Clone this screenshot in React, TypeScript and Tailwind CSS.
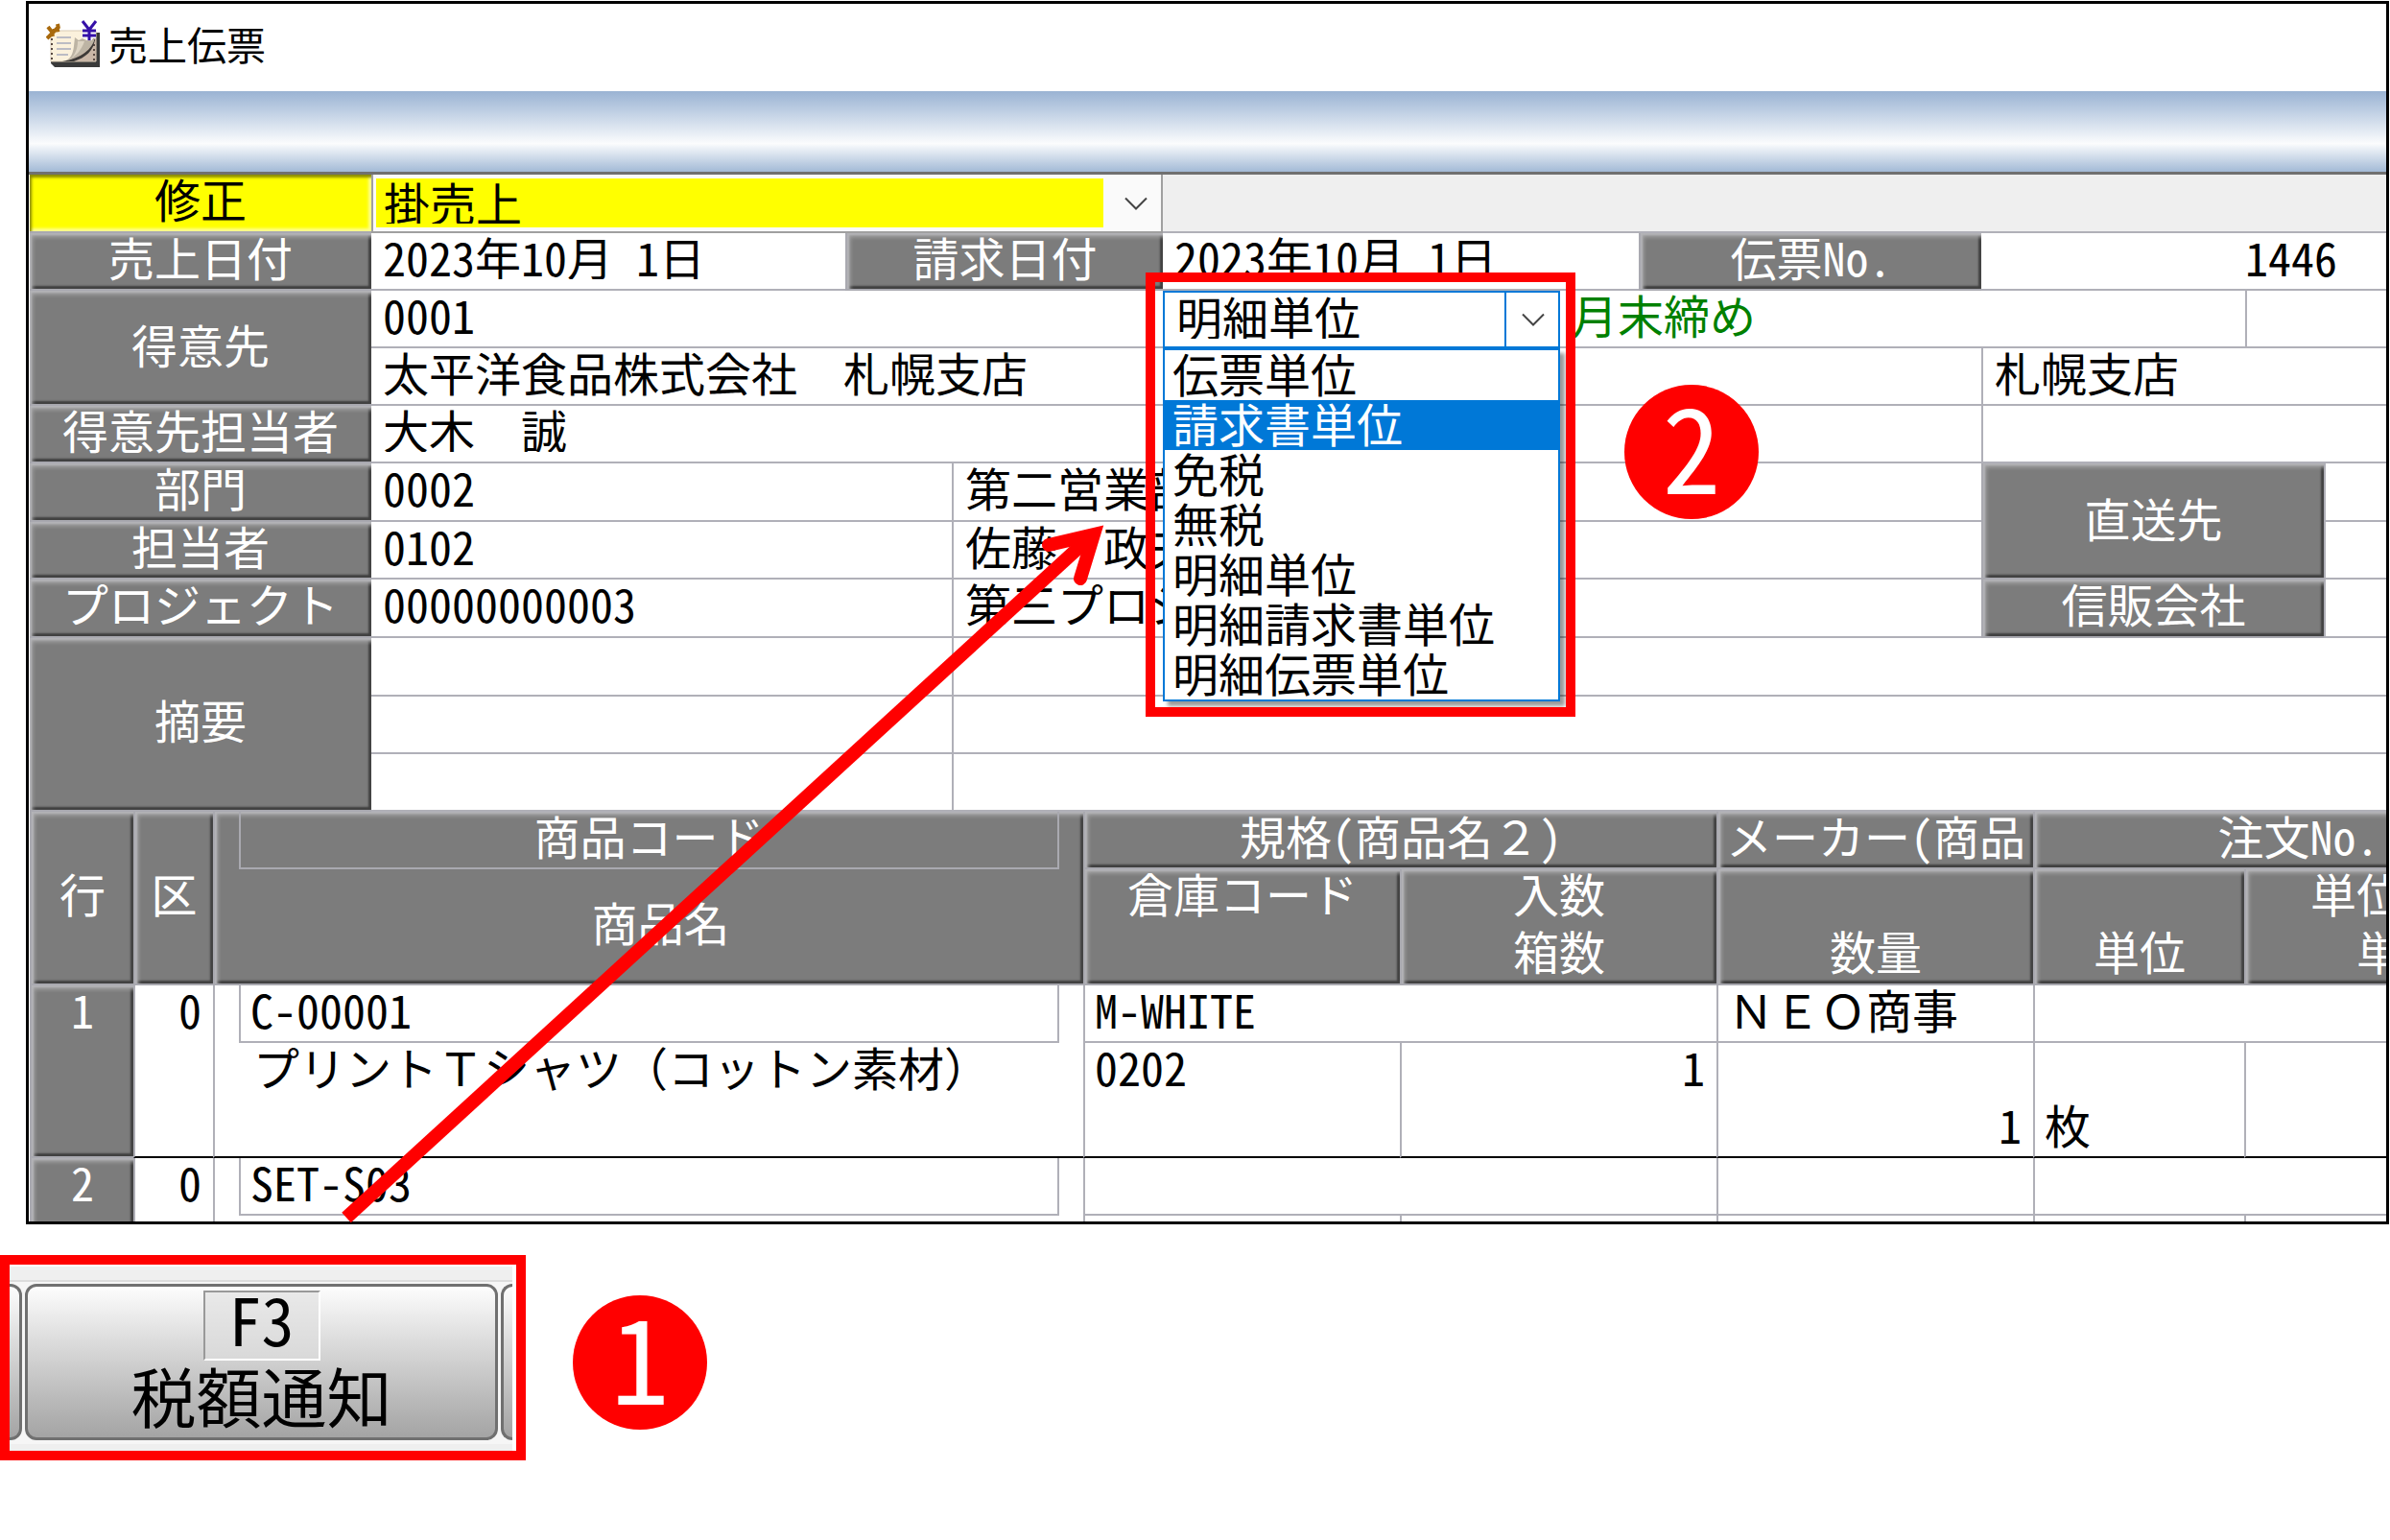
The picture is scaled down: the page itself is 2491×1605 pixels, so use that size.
import type { ReactNode } from 'react';
import { clsx } from 'clsx';

type CellProps = {
  className?: string;
  children?: ReactNode;
};

const bevel =
  'bg-[#7c7c7c] text-white shadow-[inset_2px_2px_2px_#b4b4b8,inset_3px_4px_4px_#a4a4a4,inset_-3px_-3px_2px_#404040] border-[#a9a9b0]';

// digits and latin letters are half width by default, this keeps Ｔ, ２ and （） at full width
const fullWidth = '[font-feature-settings:normal]';

const taxUnits = [
  '伝票単位',
  '請求書単位',
  '免税',
  '無税',
  '明細単位',
  '明細請求書単位',
  '明細伝票単位',
];

const Label: React.FC<CellProps & { htmlFor?: string }> = ({ className, children, htmlFor }) => (
  <label
    htmlFor={htmlFor}
    className={clsx('flex justify-center border-b-2 whitespace-nowrap', bevel, className)}
  >
    {children}
  </label>
);

const Cell: React.FC<CellProps> = ({ className, children }) => (
  <div className={clsx('border-b-2 border-[#b0b0b8] bg-white pl-3 whitespace-nowrap', className)}>
    {children}
  </div>
);

type FieldProps = { id: string; value: string; className?: string };

const Field: React.FC<FieldProps> = ({ id, value, className }) => (
  <input id={id} defaultValue={value} className={clsx('block h-12 w-full outline-none', className)} />
);

const Chevron = () => (
  <svg className="w-6" viewBox="0 0 24 14" fill="none" stroke="#444" strokeWidth="2">
    <path d="M1 1.5 12 12.5 23 1.5" />
  </svg>
);

const SlipIcon = () => (
  <svg className="h-[49px] w-[57px]" viewBox="0 0 57 49">
    <path d="M5 42h47V13h4v36H9l-4-4z" fill="#3a3a3a" />
    <path d="M5 11h47v32H5z" fill="#fbf1dc" stroke="#d9cbb4" />
    <path d="M11 18h15M11 24h15M11 30h15M11 36h12" stroke="#bcbcc4" strokeWidth="2" />
    <path d="M6 14v29M50 18v24" stroke="#5a4a44" strokeWidth="2" strokeDasharray="2 3" />
    <path d="M52 18v25H24z" fill="#c9b6a6" />
    <path d="M50 20v22" stroke="#5a4a44" strokeWidth="2" strokeDasharray="2 3" />
    <path d="M18 43c8-2 10-8 11-16l1-9 4 3 4-2 4 2 9-2C48 29 36 39 18 43z" fill="#bdb4a4" />
    <path d="M33 22c0 8-3 14-7 18 6-4 11-9 14-18z" fill="#ded5c4" />
    <path d="M51 19C48 30 37 40 17 43h12c12-4 21-11 22-24z" fill="#3d3a37" />
    <path d="m1 19 12-12M2 7l4 5 1 5M7 11l7-1M12 4l1 5" stroke="#a8690c" strokeWidth="4" fill="none" />
    <path d="m38 1 7 9 7-9M45 10v11M38 11h14M38 16h14" stroke="#fff" strokeWidth="6" fill="none" />
    <path d="m38 1 7 9 7-9M45 10v11M38 11h14M38 16h14" stroke="#3510a8" strokeWidth="3" fill="none" />
  </svg>
);

const TaxUnitSelect = () => (
  <div className="relative h-[60px] w-[414px] bg-white">
    <select
      aria-label="税額通知"
      defaultValue="明細単位"
      className="h-full w-full appearance-none border-2 border-[#0078d7] pb-2 pl-3 outline-none"
    >
      {taxUnits.map((unit) => (
        <option key={unit}>{unit}</option>
      ))}
    </select>
    <div className="pointer-events-none absolute inset-y-0 right-0 flex w-[58px] items-center justify-center border-l-2 border-[#0078d7]">
      <Chevron />
    </div>
    <ul
      role="listbox"
      className="absolute top-full left-0 z-10 w-full border-2 border-[#0078d7] bg-white text-black shadow-[5px_5px_4px_#0006]"
    >
      {taxUnits.map((unit) => (
        <li
          key={unit}
          role="option"
          aria-selected={unit === '請求書単位'}
          className={clsx(
            'h-[52px] pl-2 leading-[46px]',
            unit === '請求書単位' && 'bg-[#0078d7] text-white',
          )}
        >
          {unit}
        </li>
      ))}
    </ul>
  </div>
);

const SlipForm = () => (
  <div className="grid grid-cols-[356px_494px_111px_220px_496px_357px_275px_82px_1fr] grid-rows-[61px_60px_60px_60px_60px_61px_60px_61px_61px_60px_60px]">
    <label
      htmlFor="kind"
      className="flex justify-center border-b-2 border-[#a9a9b0] bg-[#ff0] shadow-[inset_2px_3px_3px_#8a8a00,inset_-3px_-3px_3px_#ffff90]"
    >
      修正
    </label>
    <div className="relative col-span-3 border-x-2 border-b-2 border-[#a0a0a0] bg-[#fafafa] py-1 pl-[3px]">
      <select
        id="kind"
        className="block h-full w-[758px] appearance-none bg-[#ff0] pb-1 pl-2 outline-none"
      >
        <option>掛売上</option>
      </select>
      <div className="pointer-events-none absolute inset-y-0 right-3.5 flex items-center">
        <Chevron />
      </div>
    </div>
    <div className="col-span-5 border-b-2 border-[#b0b0b8] bg-[#efefef]" />

    <Label htmlFor="salesDate">売上日付</Label>
    <Cell>
      <Field id="salesDate" value="2023年10月 1日" />
    </Cell>
    <Label htmlFor="billingDate" className="col-span-2 border-l-2">
      請求日付
    </Label>
    <Cell>
      <Field id="billingDate" value="2023年10月 1日" />
    </Cell>
    <Label htmlFor="slipNo" className="border-l-2">
      伝票No.
    </Label>
    <Cell className="col-span-3 pr-[51px]">
      <Field id="slipNo" value="1446" className="text-right" />
    </Cell>

    <Label htmlFor="customer" className="row-span-2 items-center pb-2">
      得意先
    </Label>
    <Cell className="col-span-3">
      <Field id="customer" value="0001" />
    </Cell>
    <div className="col-span-3 flex border-b-2 border-[#b0b0b8] bg-white">
      <TaxUnitSelect />
      <span className="pl-3 text-[#008000]">月末締め</span>
    </div>
    <Cell className="col-span-2 border-l-2" />
    <Cell className={clsx('col-span-5', fullWidth)}>太平洋食品株式会社　札幌支店</Cell>
    <Cell className="col-span-3 border-l-2">札幌支店</Cell>

    <Label htmlFor="contact">得意先担当者</Label>
    <Cell className="col-span-5">
      <Field id="contact" value="大木　誠" className={fullWidth} />
    </Cell>
    <Cell className="col-span-3 border-l-2" />

    <Label htmlFor="section">部門</Label>
    <Cell className="col-span-2">
      <Field id="section" value="0002" />
    </Cell>
    <Cell className="col-span-3 border-l-2">第二営業部</Cell>
    <Label className="col-span-2 row-span-2 items-center border-l-2 pb-2">直送先</Label>
    <Cell className="border-l-2" />

    <Label htmlFor="staff">担当者</Label>
    <Cell className="col-span-2">
      <Field id="staff" value="0102" />
    </Cell>
    <Cell className={clsx('col-span-3 border-l-2', fullWidth)}>佐藤　政夫</Cell>
    <Cell className="border-l-2" />

    <Label htmlFor="project">プロジェクト</Label>
    <Cell className="col-span-2">
      <Field id="project" value="00000000003" />
    </Cell>
    <Cell className="col-span-3 border-l-2">第三プロジェクト</Cell>
    <Label className="col-span-2 border-l-2">信販会社</Label>
    <Cell className="border-l-2" />

    <Label className="row-span-3 items-center pb-3">摘要</Label>
    <Cell className="col-span-2" />
    <Cell className="col-span-6 border-l-2" />
    <Cell className="col-span-2" />
    <Cell className="col-span-6 border-l-2" />
    <Cell className="col-span-2" />
    <Cell className="col-span-6 border-l-2" />
  </div>
);

type TableCellProps = CellProps & { rowSpan?: number; colSpan?: number };

const Th: React.FC<TableCellProps> = ({ className, ...rest }) => (
  <th
    className={clsx('border-b-2 border-l-2 p-0 align-top font-normal whitespace-nowrap', bevel, className)}
    {...rest}
  />
);

const Td: React.FC<TableCellProps> = ({ className, ...rest }) => (
  <td className={clsx('border-l-2 align-top whitespace-nowrap', className)} {...rest} />
);

type Line = {
  no: number;
  kubun: string;
  code: string;
  name?: string;
  spec?: string;
  warehouse?: string;
  packs?: string;
  maker?: string;
  quantity?: string;
  unit?: string;
};

const lines: Line[] = [
  {
    no: 1,
    kubun: '0',
    code: 'C-00001',
    name: 'プリントＴシャツ（コットン素材）',
    spec: 'M-WHITE',
    warehouse: '0202',
    packs: '1',
    maker: 'ＮＥＯ商事',
    quantity: '1',
    unit: '枚',
  },
  { no: 2, kubun: '0', code: 'SET-S03' },
];

const upper = 'border-b-2 border-[#b0b0b8] px-2.5';
const lineEnd = 'border-b-2 border-b-black border-l-[#b0b0b8]';

const DetailTable = () => (
  <div className="h-[427px]">
    <table className="w-[2639px] table-fixed border-separate border-spacing-0">
      <colgroup>
        <col className="w-[108px]" />
        <col className="w-[83px]" />
        <col className="w-[907px]" />
        <col className="w-[330px]" />
        <col className="w-[330px]" />
        <col className="w-[330px]" />
        <col className="w-[220px]" />
        <col className="w-[331px]" />
      </colgroup>
      <thead>
        <tr className="h-[60px]">
          <Th rowSpan={2} className="border-l-0 pt-[60px]">
            行
          </Th>
          <Th rowSpan={2} className="pt-[60px]">
            区
          </Th>
          <Th rowSpan={2}>
            <div className="mx-[25px] h-[60px] border-x-2 border-b-2 border-[#a9a9b0]">商品コード</div>
            <div className="pt-[30px] pl-6">商品名</div>
          </Th>
          <Th colSpan={2}>
            規格(商品名<span className={fullWidth}>２</span>)
          </Th>
          <Th>メーカー(商品</Th>
          <Th colSpan={2}>注文No.</Th>
        </tr>
        <tr className="h-[121px]">
          <Th>倉庫コード</Th>
          <Th>
            <div className="h-[60px]">入数</div>
            <div>箱数</div>
          </Th>
          <Th className="pt-[60px]">数量</Th>
          <Th className="pt-[60px]">単位</Th>
          <Th className="text-left">
            <div className="h-[60px] pl-[67px]">単位</div>
            <div className="pl-[115px]">単</div>
          </Th>
        </tr>
      </thead>
      {lines.map((line) => (
        <tbody key={line.no}>
          <tr className="h-[60px]">
            <Th rowSpan={2} className="border-l-0">
              {line.no}
            </Th>
            <Td rowSpan={2} className={clsx('border-l-0 pr-3 text-right', lineEnd)}>
              {line.kubun}
            </Td>
            <Td rowSpan={2} className={lineEnd}>
              <div className="mx-[25px] h-[60px] border-x-2 border-b-2 border-[#b0b0b8] pl-2.5">
                {line.code}
              </div>
              <div className={clsx('pl-10', fullWidth)}>{line.name}</div>
            </Td>
            <Td colSpan={2} className={upper}>
              {line.spec}
            </Td>
            <Td className={clsx(upper, fullWidth)}>{line.maker}</Td>
            <Td colSpan={2} className={upper} />
          </tr>
          <tr className="h-[120px]">
            <Td className={clsx('pl-2.5', lineEnd)}>{line.warehouse}</Td>
            <Td className={clsx('pr-3 text-right', lineEnd)}>{line.packs}</Td>
            <Td className={clsx('pt-[60px] pr-3 text-right', lineEnd)}>{line.quantity}</Td>
            <Td className={clsx('pt-[60px] pl-2.5', lineEnd)}>{line.unit}</Td>
            <Td className={lineEnd} />
          </tr>
        </tbody>
      ))}
    </table>
  </div>
);

const keyFace = 'border-[3px] border-[#707070] bg-linear-to-b from-[#fdfdfd] to-[#a4a4a4]';

const FunctionKey = () => (
  <div className="h-[214px] w-[548px] border-10 border-[#f00] bg-white pt-0.5 pr-1">
    <div className="h-full bg-[#efefef] pt-3.5">
      <div className="flex h-[171px] gap-[3px] border-t-2 border-[#dcdcdc] bg-[#f6f6f6] pt-0.5 pb-1">
        <div className={clsx('w-[13px] rounded-r-xl border-l-0', keyFace)} />
        <button
          type="button"
          className={clsx(
            'flex flex-1 flex-col items-center gap-0.5 rounded-xl pt-1 text-[68px] leading-none',
            keyFace,
          )}
        >
          <span className="h-[73px] w-[122px] border-2 border-t-[#999] border-r-white border-b-white border-l-[#999] bg-[#dedede]/60 leading-[54px]">
            F3
          </span>
          <span>税額通知</span>
        </button>
        <div className={clsx('w-3 rounded-l-xl border-r-0', keyFace)} />
      </div>
    </div>
  </div>
);

const Step: React.FC<CellProps> = ({ className, children }) => (
  <div
    className={clsx(
      'flex size-[140px] items-center justify-center rounded-full bg-[#f00] pb-[18px] text-[122px] text-white',
      className,
    )}
  >
    {children}
  </div>
);

export default function App() {
  return (
    <main className="relative min-h-screen overflow-hidden bg-white pt-px font-['Noto_Sans_CJK_JP',sans-serif] text-[48px] leading-none text-black [font-feature-settings:'hwid']">
      <section className="mr-px ml-[27px] overflow-hidden border-[3px] border-black">
        <header className="flex h-[91px] items-center gap-2 pb-2 pl-[18px] text-[41px]">
          <SlipIcon />
          <h1>売上伝票</h1>
        </header>
        <div className="h-[84px] bg-linear-to-b from-[#9ab3d3] via-[#fbfcfd] via-65% to-[#a3bad6]" />
        <div className="h-[3px] bg-[#707070]" />
        <div className="pl-px">
          <SlipForm />
          <DetailTable />
        </div>
      </section>

      <div className="mt-8 flex">
        <FunctionKey />
        <Step className="mt-[42px] ml-[49px]">1</Step>
      </div>

      <div className="pointer-events-none absolute top-[284px] left-[1194px] z-20 h-[463px] w-[448px] border-10 border-[#f00]" />
      <Step className="absolute top-[401px] left-[1693px] z-20">2</Step>
      <svg
        className="pointer-events-none absolute top-[540px] left-[350px] z-20 h-[740px] w-[810px]"
        viewBox="350 540 810 740"
        fill="none"
        stroke="#f00"
        strokeWidth="14"
      >
        <path d="M361 1269 1136 560" />
        <path d="M1093 568 1140 557 1126 603" strokeLinecap="round" strokeLinejoin="miter" />
      </svg>
    </main>
  );
}
